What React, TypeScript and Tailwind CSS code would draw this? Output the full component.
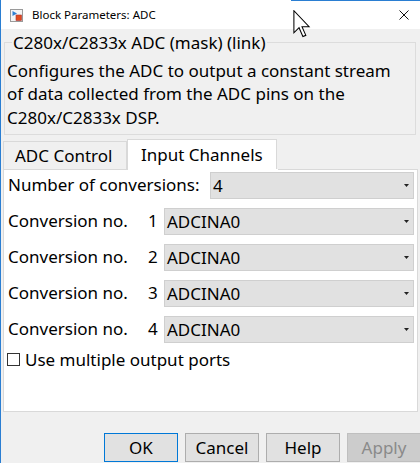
import React from 'react';

const font = { fontFamily: '"Noto Sans", "Open Sans", sans-serif' };

function BlockIcon() {
  return (
    <svg width="13" height="13" viewBox="0 0 13 13">
      <rect x="0.5" y="0.5" width="12" height="12" fill="#f4f4f4" stroke="#9a9a9a" />
      <path d="M2.5 2 L2.5 7 L7 4.5 Z" fill="#2f7fd0" />
      <rect x="6" y="6" width="5.5" height="5.5" fill="#e04a1c" stroke="#a33" strokeWidth="0.6" />
    </svg>
  );
}

function Combo({ value }: { value: string }) {
  return (
    <div className="h-[27px] mr-[3px] flex-1 flex items-center justify-between bg-[#e1e1e1] border border-[#cfcfcf] pl-[2px] pr-[4px]">
      <span className="text-[17px] leading-none">{value}</span>
      <svg width="5" height="3" viewBox="0 0 5 3">
        <path d="M0 0 L5 0 L2.5 3 Z" fill="#222" />
      </svg>
    </div>
  );
}

function Btn({ label, kind }: { label: string; kind?: 'default' | 'disabled' }) {
  const cls =
    kind === 'default'
      ? 'border-[#0078d7] bg-[#e1e1e1] text-black'
      : kind === 'disabled'
      ? 'border-[#bfbfbf] bg-[#cccccc] text-[#8a8a8a]'
      : 'border-[#adadad] bg-[#e1e1e1] text-black';
  return (
    <div className={`w-[74px] h-[29px] shrink-0 border flex items-center justify-center text-[17px] ${cls}`}>
      {label}
    </div>
  );
}

export default function App() {
  const rows = [1, 2, 3, 4];
  return (
    <div style={font} className="relative w-[420px] h-[463px] overflow-hidden bg-[#f0f0f0] border-l border-[#2a7ed2] text-black">
      {/* title bar */}
      <div className="h-[29px] bg-white flex flex-col">
        <div className="flex h-[1px]">
          <div className="w-[290px]" />
          <div className="flex-1 bg-[#2a7ed2]" />
        </div>
        <div className="flex-1 flex items-center">
          <div className="ml-[9px] mt-[1px]">
            <BlockIcon />
          </div>
          <span className="ml-[9px] text-[11.5px] leading-none">Block Parameters: ADC</span>
          <div className="ml-auto mr-[11px]">
            <svg width="10" height="10" viewBox="0 0 10 10">
              <path d="M0.5 0.5 L9.5 9.5 M9.5 0.5 L0.5 9.5" stroke="#111" strokeWidth="1" />
            </svg>
          </div>
        </div>
      </div>

      {/* mask description */}
      <fieldset className="ml-[3px] mr-[4px] mt-[2px] border border-[#dcdcdc] pl-[2px] pb-[7px] h-[104px]">
        <legend className="ml-[5px] px-[1px] text-[17px] leading-[23px]">C280x/C2833x ADC (mask) (link)</legend>
        <p className="w-[395px] text-[17px] leading-[23.3px] mt-[5px]">
          Configures the ADC to output a constant stream of data collected from the ADC pins on the C280x/C2833x DSP.
        </p>
      </fieldset>

      {/* tabs */}
      <div className="ml-[2px] mt-[4px] flex items-end h-[30px]">
        <div className="w-[124px] h-[28px] border border-b-0 border-[#d9d9d9] bg-[#f0f0f0] flex items-center pl-[11px] text-[17px]">
          ADC Control
        </div>
        <div className="w-[150px] h-[30px] border border-b-0 border-[#d9d9d9] bg-white flex items-center pl-[13px] text-[17px]">
          Input Channels
        </div>
      </div>
      <div className="ml-[2px] w-[415px] h-[243px] bg-white border border-t-0 border-[#d9d9d9] flex flex-col">
        <div className="flex">
          <div className="w-[124px] h-px bg-[#d9d9d9]" />
          <div className="w-[150px] h-px" />
          <div className="flex-1 h-px bg-[#d9d9d9]" />
        </div>
        <div className="flex items-center h-[28px] mt-[1px]">
          <span className="pl-[4px] text-[17px] w-[206px]">Number of conversions:</span>
          <Combo value="4" />
        </div>
        {rows.map((n) => (
          <div key={n} className="flex items-center h-[28px] mt-[8px]">
            <span className="pl-[4px] text-[17px] w-[144px]">Conversion no.</span>
            <span className="text-[17px] w-[16px]">{n}</span>
            <Combo value="ADCINA0" />
          </div>
        ))}
        <div className="flex items-center mt-[4px] pl-[3px]">
          <div className="w-[13px] h-[13px] border border-[#333] bg-white" />
          <span className="ml-[5px] text-[17px]">Use multiple output ports</span>
        </div>
      </div>

      {/* buttons */}
      <div className="flex gap-[7px] mt-[21px] pl-[103px]">
        <Btn label="OK" kind="default" />
        <Btn label="Cancel" />
        <Btn label="Help" />
        <Btn label="Apply" kind="disabled" />
      </div>

      {/* mouse pointer */}
      <svg className="absolute left-[292px] top-[10px]" width="18" height="28" viewBox="0 0 12 19">
        <path d="M0.5 0.5 L0.5 15.5 L4 12 L6.6 18 L8.6 17.2 L6 11.3 L10.8 11.3 Z" fill="#fff" stroke="#000" strokeWidth="0.7" strokeLinejoin="miter" />
      </svg>
    </div>
  );
}
